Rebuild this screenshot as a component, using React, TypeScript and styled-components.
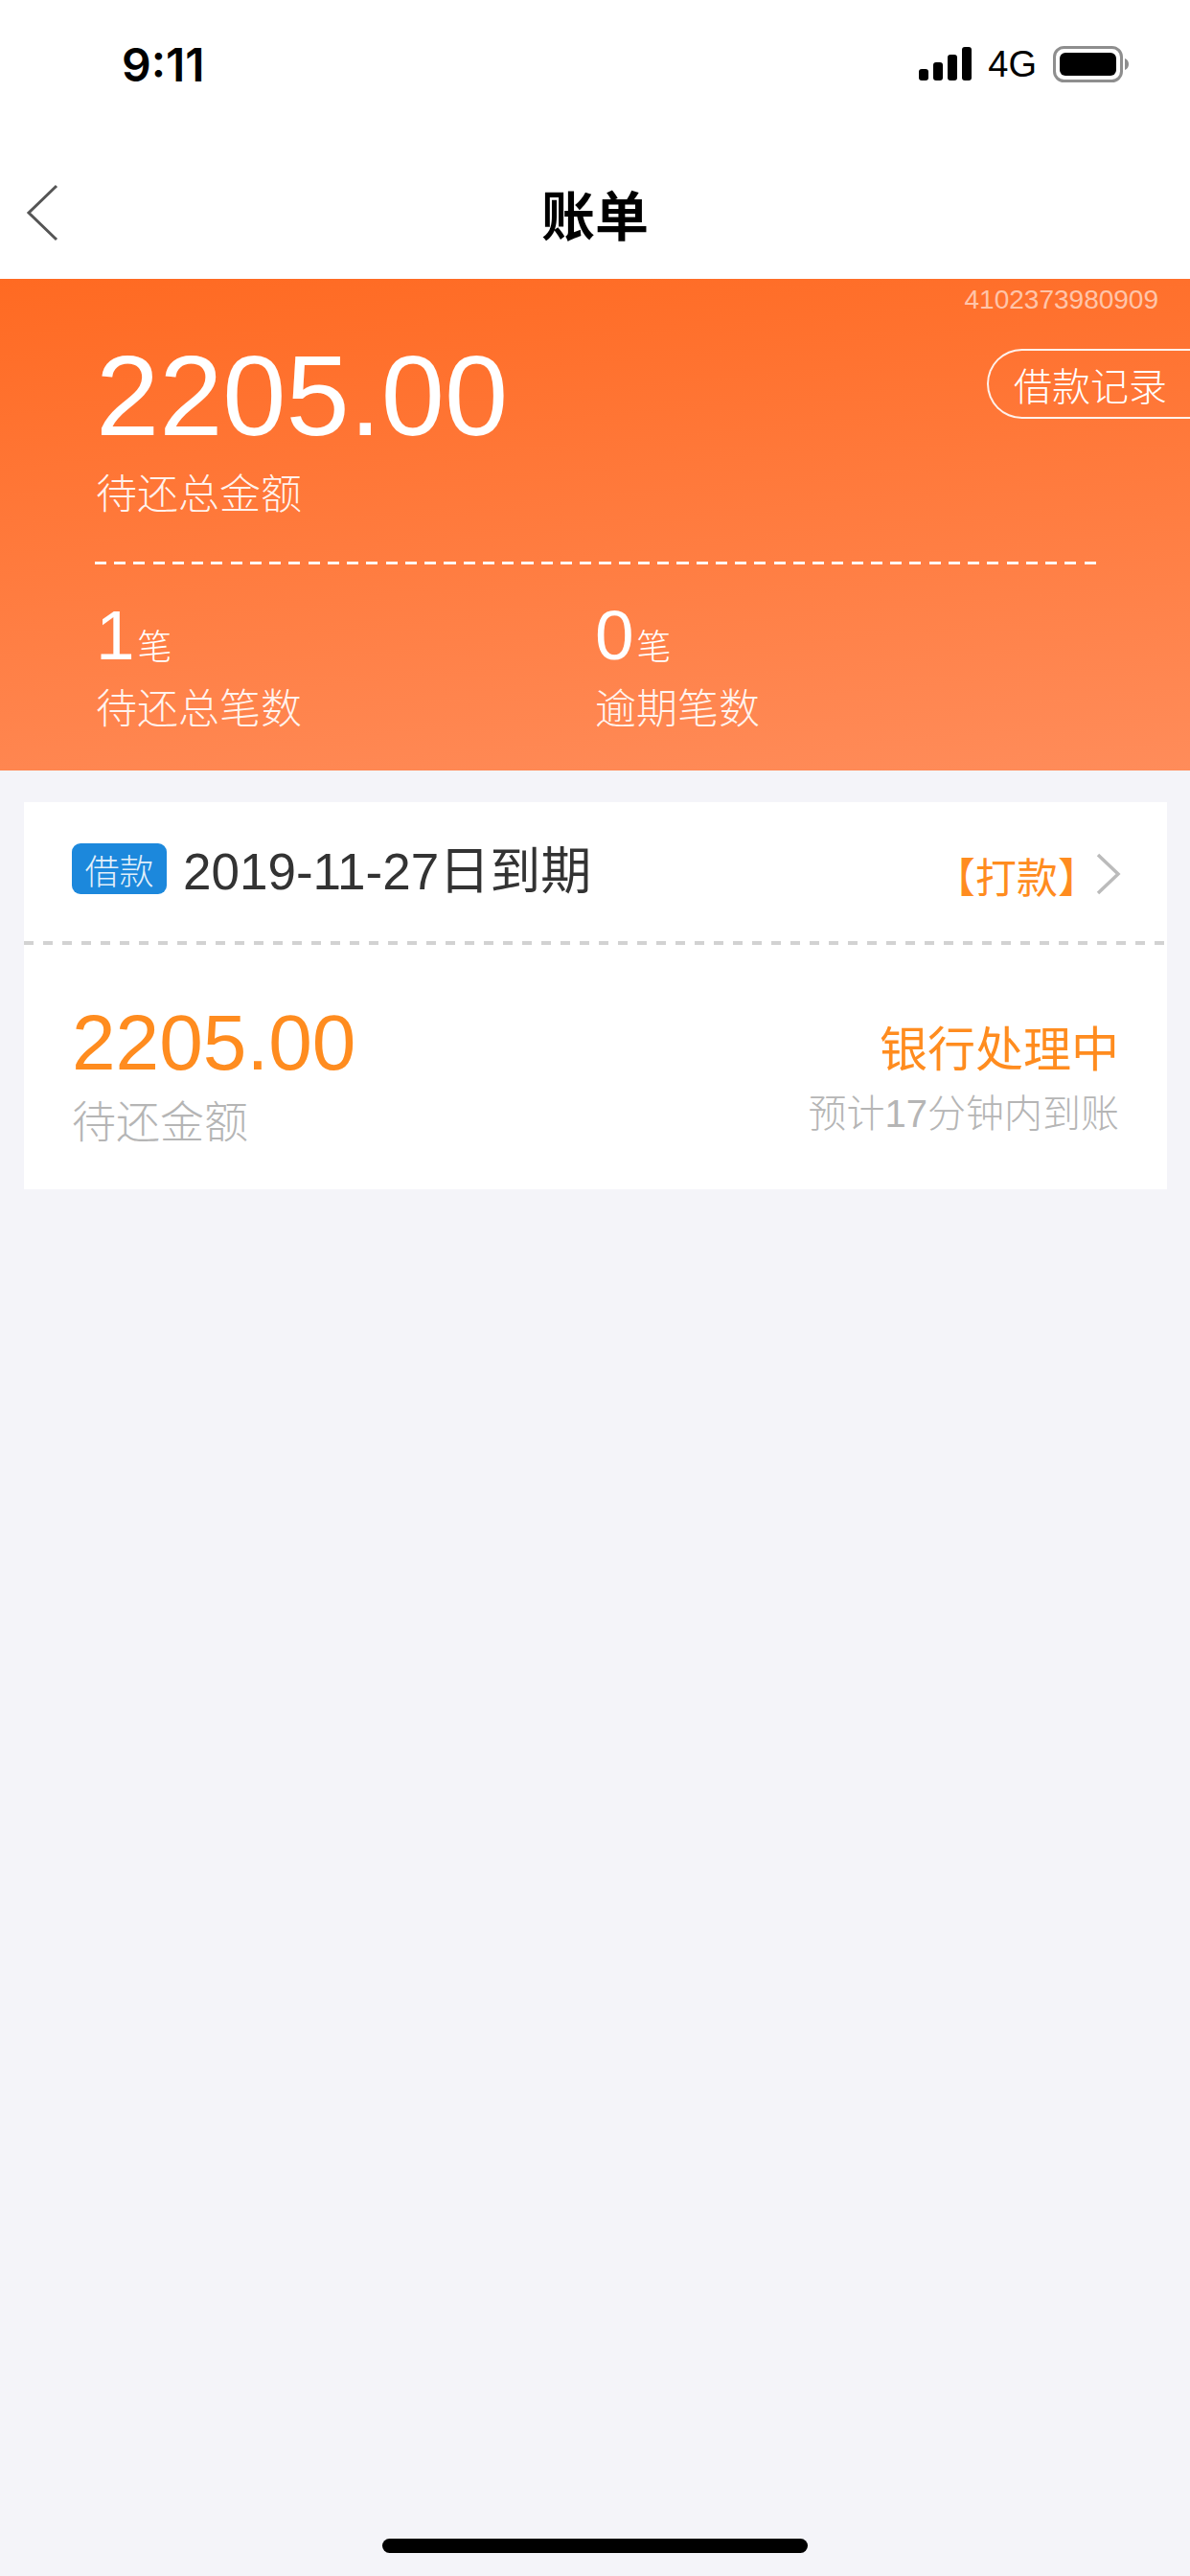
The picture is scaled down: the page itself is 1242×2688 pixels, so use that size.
import React from "react";
import styled, { createGlobalStyle } from "styled-components";

const Global = createGlobalStyle`
  html, body { margin: 0; padding: 0; background: #f4f4f9; }
  * { box-sizing: border-box; }
`;

const Page = styled.div`
  width: 1242px;
  height: 2688px;
  display: flex;
  flex-direction: column;
  overflow: hidden;
  background: #f4f4f9;
  font-family: "Liberation Sans", "Noto Sans CJK SC", sans-serif;
  font-weight: 300;
`;

const StatusBar = styled.div`
  height: 132px;
  background: #fff;
  display: flex;
  justify-content: space-between;
  align-items: flex-start;
  padding: 44px 63px 0 127px;
`;

const Clock = styled.span`
  font-family: Inter, sans-serif;
  font-size: 48px;
  line-height: 47px;
  font-weight: 600;
  color: #000;
`;

const StatusIcons = styled.div`
  display: flex;
  align-items: center;
  height: 46px;
`;

const FourG = styled.span`
  font-size: 38px;
  line-height: 38px;
  color: #000;
  margin: 0 17px 0 17px;
`;

const Nav = styled.div`
  height: 159px;
  background: #fff;
  display: flex;
  align-items: center;
  justify-content: center;
  position: relative;
`;

const BackIcon = styled.svg`
  position: absolute;
  left: 26px;
  top: 60px;
`;

const Title = styled.h1`
  margin: 31px 0 0;
  font-size: 56px;
  line-height: 70px;
  font-weight: 700;
  color: #000;
`;

const Hero = styled.section`
  height: 513px;
  background: linear-gradient(175deg, #ff6a22 0%, #ff8c5a 100%);
  color: #fff;
  display: flex;
  flex-direction: column;
`;

const Serial = styled.div`
  align-self: flex-end;
  margin: 6px 33px 0 0;
  font-size: 28px;
  line-height: 32px;
  color: rgba(255, 255, 255, 0.6);
`;

const HeroTop = styled.div`
  display: flex;
  justify-content: space-between;
  align-items: flex-start;
  margin-top: 35px;
  padding-left: 100px;
`;

const HeroAmount = styled.div`
  font-size: 119px;
  line-height: 124px;
  margin-top: -13px;
`;

const RecordButton = styled.div`
  width: 212px;
  height: 73px;
  border: 2px solid rgba(255, 255, 255, 0.9);
  border-right: none;
  border-radius: 37px 0 0 37px;
  display: flex;
  align-items: center;
  padding-left: 26px;
  font-size: 40px;
  white-space: nowrap;
`;

const HeroLabel = styled.div`
  font-size: 43px;
  line-height: 60px;
  color: rgba(255, 255, 255, 0.92);
`;

const AmountLabel = styled(HeroLabel)`
  margin: 11px 0 0 100px;
`;

const HeroDash = styled.div`
  margin: 40px 0 0 99px;
  width: 1045px;
  height: 3px;
  background: repeating-linear-gradient(90deg, rgba(255, 255, 255, 0.95) 0 12px, transparent 12px 20.25px);
`;

const Stats = styled.div`
  display: flex;
  padding-left: 100px;
  margin-top: 32px;
`;

const Stat = styled.div`
  width: 521px;
`;

const StatValue = styled.div`
  display: flex;
  align-items: baseline;
  font-size: 73px;
  line-height: 84px;
  height: 89px;
`;

const StatUnit = styled.span`
  font-size: 36px;
  margin-left: 3px;
`;

const Card = styled.section`
  margin: 33px 24px 0 25px;
  height: 404px;
  background: #fff;
  display: flex;
  flex-direction: column;
`;

const CardHead = styled.div`
  height: 145px;
  display: flex;
  align-items: center;
  padding: 0 48px 0 50px;
`;

const Tag = styled.span`
  width: 99px;
  height: 53px;
  background: #1c88dc;
  border-radius: 9px;
  color: rgba(255, 255, 255, 0.88);
  font-size: 36px;
  display: flex;
  align-items: center;
  justify-content: center;
  margin: 2px 17px 0 0;
  position: relative;
  top: -4px;
`;

const DueDate = styled.span`
  font-size: 53px;
  line-height: 60px;
  font-weight: 400;
  color: #333;
  flex: 1;
  position: relative;
  top: 0;
`;

const Action = styled.span`
  font-size: 43px;
  line-height: 60px;
  font-weight: 400;
  color: #ff8c1f;
  margin: 14px -3px 0 0;
`;

const Chevron = styled.svg`
  margin-top: 4px;
`;

const CardDash = styled.div`
  height: 4px;
  background: repeating-linear-gradient(90deg, #d2d2d2 0 10px, transparent 10px 20px);
`;

const CardBody = styled.div`
  flex: 1;
  display: flex;
  justify-content: space-between;
  padding: 0 50px;
`;

const Col = styled.div<{ $end?: boolean }>`
  display: flex;
  flex-direction: column;
  align-items: ${(p) => (p.$end ? "flex-end" : "flex-start")};
`;

const CardAmount = styled.div`
  font-size: 82px;
  line-height: 90px;
  color: #ff8c1f;
  margin-top: 57px;
`;

const CardLabel = styled.div`
  font-size: 46px;
  line-height: 60px;
  color: #b5b5b5;
  margin-top: 8px;
`;

const BankState = styled.div`
  font-size: 50px;
  line-height: 60px;
  font-weight: 400;
  color: #ff8c1f;
  margin-top: 80px;
`;

const Eta = styled.div`
  font-size: 40px;
  line-height: 50px;
  color: #b5b5b5;
  margin-top: 11px;
`;

const HomeIndicator = styled.div`
  width: 444px;
  height: 15px;
  border-radius: 8px;
  background: #000;
  margin: auto auto 24px;
`;

export default function App() {
  return (
    <Page>
      <Global />
      <StatusBar>
        <Clock>9:11</Clock>
        <StatusIcons>
          <svg width="55" height="36" viewBox="0 0 55 36">
            <rect x="0" y="23" width="10" height="12" rx="3" />
            <rect x="15" y="16" width="10" height="19" rx="3" />
            <rect x="30" y="8" width="10" height="27" rx="3" />
            <rect x="45" y="0" width="10" height="35" rx="3" />
          </svg>
          <FourG>4G</FourG>
          <svg width="80" height="38" viewBox="0 0 80 38">
            <rect x="1.5" y="1.5" width="70" height="35" rx="10" fill="none" stroke="#8e8e8e" strokeWidth="3" />
            <rect x="7" y="7" width="59" height="24" rx="6" fill="#000" />
            <path d="M75 13c3 1 4 3.500 4 6s-1 5-4 6z" fill="#8e8e8e" />
          </svg>
        </StatusIcons>
      </StatusBar>
      <Nav>
        <BackIcon width="36" height="60" viewBox="0 0 36 60">
          <path d="M33 2 4 30l29 28" fill="none" stroke="#555" strokeWidth="3" />
        </BackIcon>
        <Title>账单</Title>
      </Nav>
      <Hero>
        <Serial>4102373980909</Serial>
        <HeroTop>
          <HeroAmount>2205.00</HeroAmount>
          <RecordButton>借款记录</RecordButton>
        </HeroTop>
        <AmountLabel>待还总金额</AmountLabel>
        <HeroDash />
        <Stats>
          <Stat>
            <StatValue>1<StatUnit>笔</StatUnit></StatValue>
            <HeroLabel>待还总笔数</HeroLabel>
          </Stat>
          <Stat>
            <StatValue>0<StatUnit>笔</StatUnit></StatValue>
            <HeroLabel>逾期笔数</HeroLabel>
          </Stat>
        </Stats>
      </Hero>
      <Card>
        <CardHead>
          <Tag>借款</Tag>
          <DueDate>2019-11-27日到期</DueDate>
          <Action>【打款】</Action>
          <Chevron width="26" height="44" viewBox="0 0 26 44">
            <path d="M2 2l21 20L2 42" fill="none" stroke="#bbb" strokeWidth="3.500" />
          </Chevron>
        </CardHead>
        <CardDash />
        <CardBody>
          <Col>
            <CardAmount>2205.00</CardAmount>
            <CardLabel>待还金额</CardLabel>
          </Col>
          <Col $end>
            <BankState>银行处理中</BankState>
            <Eta>预计17分钟内到账</Eta>
          </Col>
        </CardBody>
      </Card>
      <HomeIndicator />
    </Page>
  );
}
